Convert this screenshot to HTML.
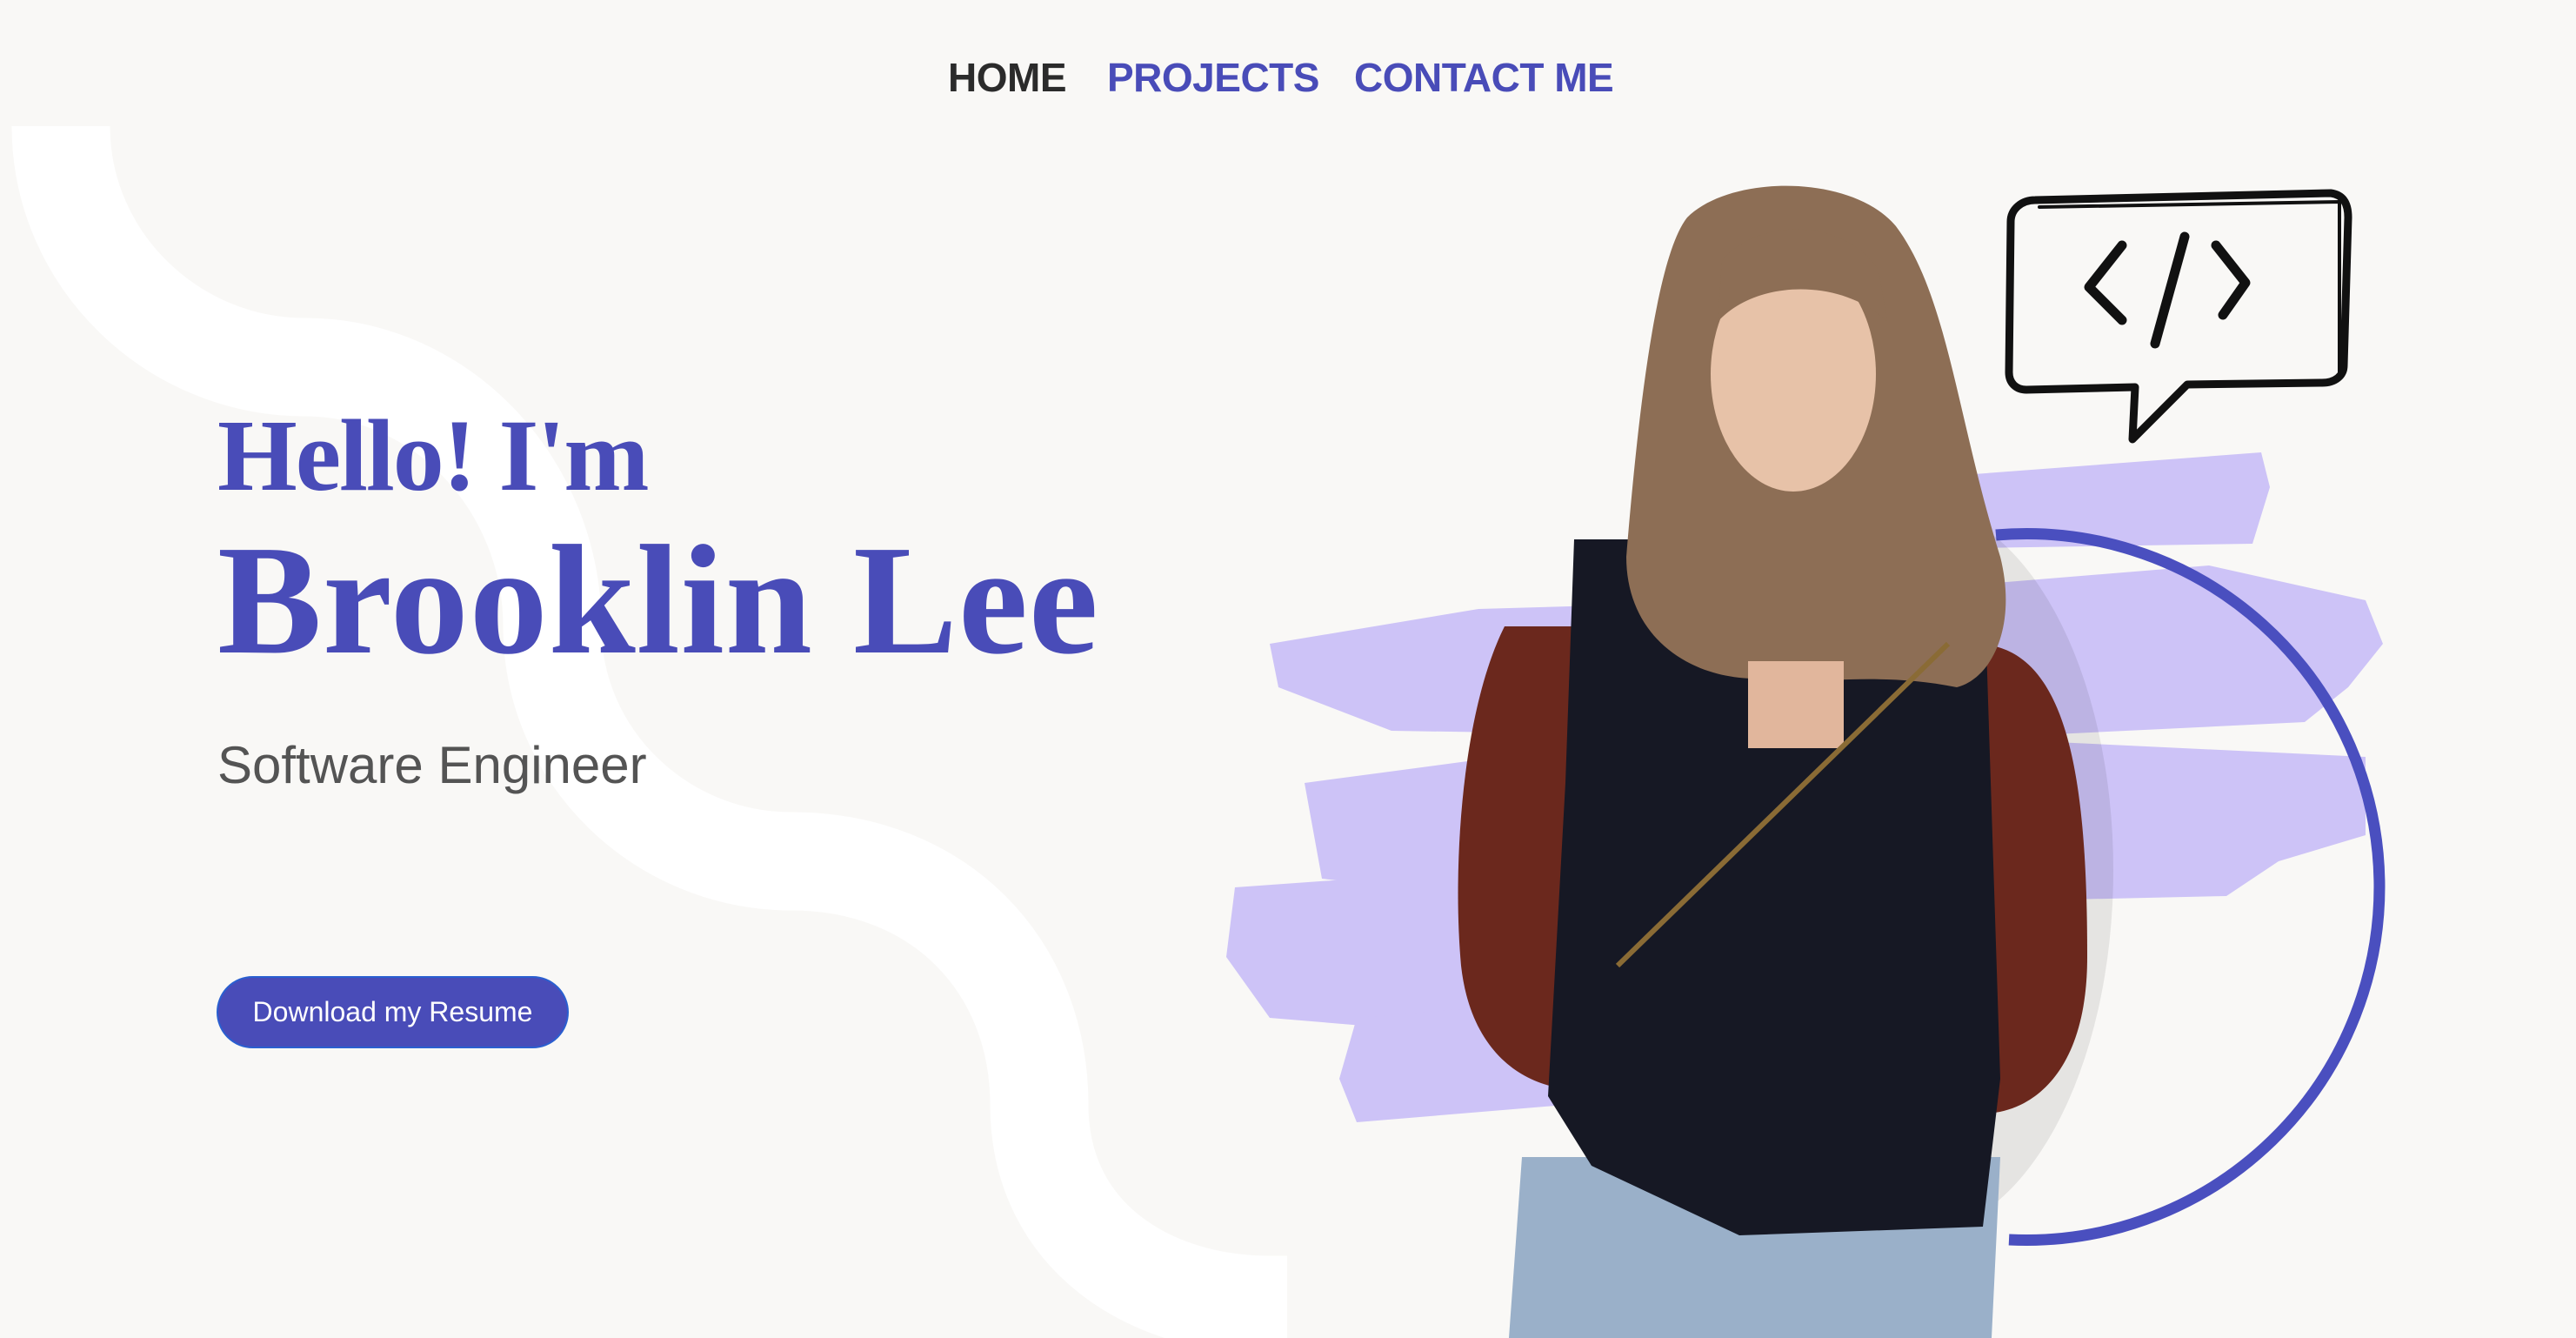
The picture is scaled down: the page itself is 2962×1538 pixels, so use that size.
<!DOCTYPE html>
<html><head><meta charset="utf-8"><style>
html,body{margin:0;padding:0;}
body{width:2962px;height:1538px;background:#f9f8f6;position:relative;overflow:hidden;font-family:"Liberation Sans",sans-serif;}
.nav{position:absolute;top:62px;font-size:46px;font-weight:bold;letter-spacing:-0.5px;}
.h1{position:absolute;left:250px;font-family:"Liberation Serif",serif;font-weight:bold;color:#494cb8;white-space:nowrap;}
</style></head><body>
<svg width="2962" height="1538" style="position:absolute;left:0;top:0">
<path d="M70,145 C70,300 200,422 350,422 C510,422 635,560 635,720 C635,870 760,990 910,990 C1080,990 1195,1110 1195,1270 C1195,1420 1320,1500 1460,1500 L1480,1500" fill="none" stroke="#ffffff" stroke-width="113"/>
<g fill="#cdc3f7">
<path d="M2270,545 L2600,520 L2610,560 L2590,625 L2270,630 Z"/>
<path d="M1460,740 L1700,700 L2050,690 L2540,650 L2720,690 L2740,740 L2700,790 L2650,830 L2240,850 L1600,840 L1470,790 Z"/>
<path d="M1500,900 L1800,860 L2300,850 L2720,870 L2720,960 L2620,990 L2560,1030 L2100,1040 L1700,1030 L1520,1010 Z"/>
<path d="M1420,1020 L1700,1000 L1960,1010 L1940,1160 L1700,1190 L1460,1170 L1410,1100 Z"/>
<path d="M1560,1170 L1800,1150 L1800,1270 L1560,1290 L1540,1240 Z"/>
</g>
<path d="M2295,615 A406,406 0 1 1 2310,1425" fill="none" stroke="#4a4fbf" stroke-width="13"/>
<g>
<ellipse cx="2200" cy="1000" rx="230" ry="420" fill="#000" opacity="0.08"/>
<path d="M1730,720 C1680,820 1670,1000 1680,1110 C1690,1200 1740,1240 1790,1250 L1830,1230 L1830,720 Z" fill="#6b281d"/>
<path d="M2270,740 C2380,740 2400,900 2400,1100 C2400,1240 2330,1280 2280,1280 L2250,1230 L2250,760 Z" fill="#6b281d"/>
<path d="M1750,1330 L2300,1330 L2290,1538 L1735,1538 Z" fill="#9ab0c9"/>
<path d="M1810,620 L2280,620 L2300,1240 L2280,1410 L2000,1420 L1830,1340 L1780,1260 L1800,900 Z" fill="#161824"/>
<path d="M1940,250 C1990,200 2130,200 2180,260 C2240,340 2250,480 2300,640 C2320,720 2290,780 2250,790 C2150,770 2080,790 2020,780 C1940,780 1870,730 1870,640 C1880,520 1900,300 1940,250 Z" fill="#8d6e55"/>
<ellipse cx="2062" cy="430" rx="95" ry="135" fill="#e7c2a8"/>
<path d="M1980,300 C2020,250 2120,250 2160,310 L2170,370 C2120,320 2020,320 1975,370 Z" fill="#8d6e55"/>
<path d="M2010,760 L2120,760 L2120,860 L2010,860 Z" fill="#e1b69c"/>
<path d="M1860,1110 L2240,740" fill="none" stroke="#8a6b35" stroke-width="6"/>
</g>
<g fill="none" stroke="#111" stroke-width="9" stroke-linecap="round" stroke-linejoin="round">
<path d="M2340,230 L2680,222 C2695,224 2700,235 2700,250 L2695,420 C2695,432 2685,440 2670,440 L2515,442 L2452,505 L2455,445 L2330,448 C2318,448 2310,440 2310,428 L2312,255 C2312,240 2325,230 2340,230 Z"/>
<path d="M2345,238 L2690,232 L2690,430" stroke-width="4"/>
<path d="M2440,282 L2402,330 L2440,368" stroke-width="11"/>
<path d="M2512,272 L2478,395" stroke-width="11"/>
<path d="M2548,282 L2582,325 L2556,362" stroke-width="11"/>
</g>
</svg>
<div class="nav" style="left:1090px;color:#2b2b2b">HOME</div>
<div class="nav" style="left:1273px;color:#494cb8">PROJECTS</div>
<div class="nav" style="left:1557px;color:#494cb8">CONTACT ME</div>
<div class="h1" style="top:456px;font-size:118px;letter-spacing:-2px;">Hello! I'm</div>
<div class="h1" style="top:586px;font-size:180px;letter-spacing:1px;">Brooklin Lee</div>
<div style="position:absolute;left:250px;top:845px;font-size:60px;color:#545454;">Software Engineer</div>
<div style="position:absolute;left:249px;top:1122px;width:405px;height:83px;border-radius:42px;background:#494cb8;border:2px solid #2a5fd0;box-sizing:border-box;color:#fff;font-size:32px;line-height:79px;text-align:center;">Download my Resume</div>
</body></html>
